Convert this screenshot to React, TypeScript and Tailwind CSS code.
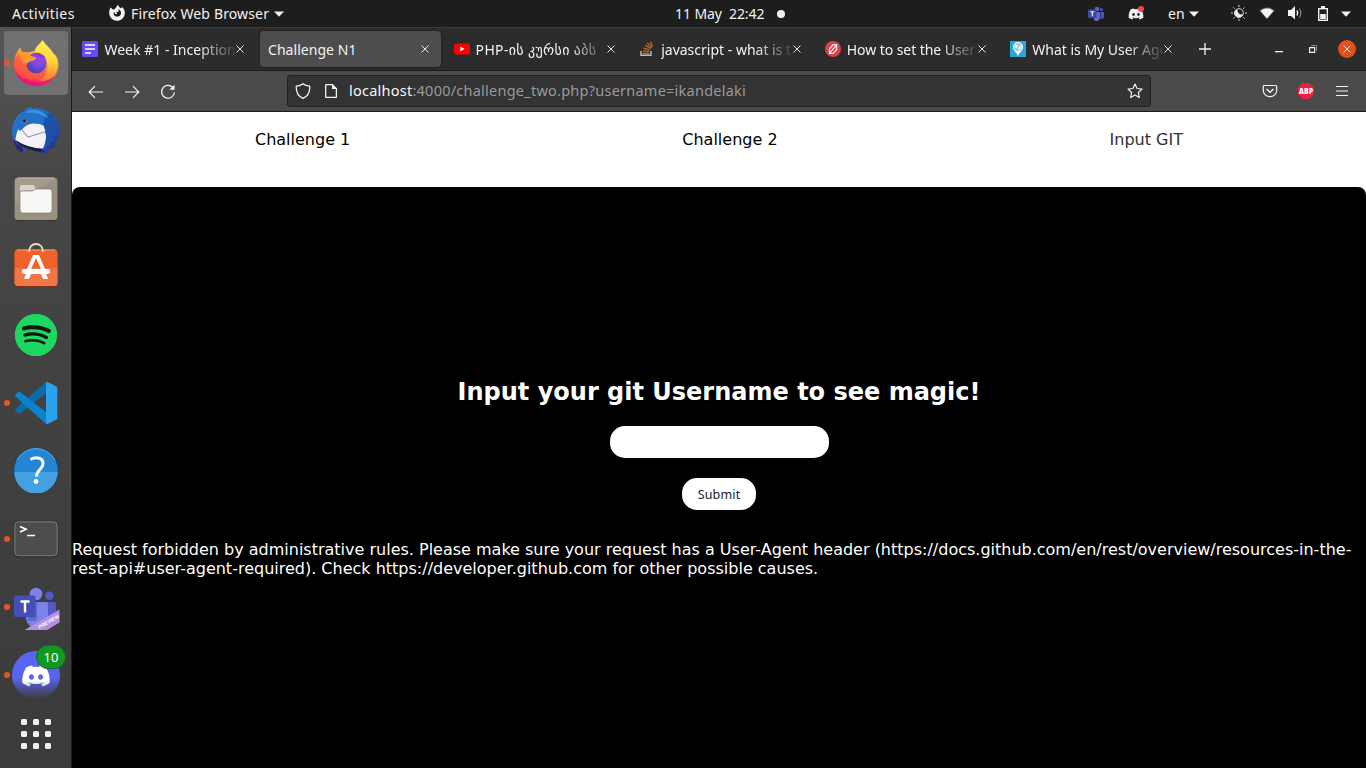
import React from "react";
import { FaSpotify, FaDiscord } from "react-icons/fa";

const ui = "font-['Noto_Sans','DejaVu_Sans',sans-serif]";

const Caret = () => (
  <svg width="10" height="6" viewBox="0 0 10 6" className="shrink-0" fill="#f2f2f2"><path d="M0 .5h10L5 5.7z" /></svg>
);

const Cross = () => (
  <svg width="8" height="8" viewBox="0 0 8 8" className="shrink-0" stroke="#e6e6e6" strokeWidth="1"><path d="M.5.5l7 7M7.5.5l-7 7" /></svg>
);

function TeamsTray() {
  return (
    <svg width="16" height="16" viewBox="0 0 16 16" className="shrink-0">
      <circle cx="9" cy="3" r="2.3" fill="#5b63c5" /><circle cx="13.4" cy="3.6" r="1.7" fill="#4b53bc" />
      <path d="M6 6h6v6a3.5 3.5 0 0 1-6 2z" fill="#6068cc" /><path d="M12.6 6H16v4.500a2.700 2.700 0 0 1-3.400 2.500z" fill="#4b53bc" />
      <rect y="3.500" width="8.500" height="8.500" rx="1" fill="#4048a8" /><path d="M2.300 5.800h4M4.300 5.800v4.500" stroke="#fff" strokeWidth="1.100" />
    </svg>
  );
}

function TopBar() {
  return (
    <header className={`flex h-[27px] shrink-0 items-center bg-[#1d1d1d] text-[14px] leading-[20px] whitespace-pre text-[#f2f2f2] ${ui}`}>
      <span className="ml-3 w-[97px] tracking-[0.45px]">Activities</span>
      <svg width="16" height="16" viewBox="0 0 16 16" className="-mt-[1px] shrink-0" fill="#f2f2f2">
        <path fillRule="evenodd" d="M1.600 2.500L4.300 4.700 7 3.100C7.200 1.600 8 .6 9.300 0c.1 1.700 1.500 2.300 2.400 3.200 1-.2 1.400-.8 1.500-1.500C15 3.900 16 6 15.800 8.500 15.400 13 12 15.800 8 15.800S.4 12.700.2 8.300c-.1-2.300.4-4.200 1.400-5.800zM5 6.800C3.900 9.500 5.500 11.600 8 11.600s4-1.600 4-3.700-1.300-3.200-2.700-3.300L9.600 6.700 6.900 7.200 8.400 8.700 6.300 9.200z" />
      </svg>
      <span className="ml-[6px] w-[143px] tracking-[0.14px]">Firefox Web Browser</span>
      <Caret />
      <span className="ml-[391px] w-[102px] tracking-[-0.08px]">11 May  22:42</span>
      <span className="size-2 rounded-full bg-[#f2f2f2]" />
      <span className="ml-[303px]"><TeamsTray /></span>
      <span className="relative ml-6 flex">
        <FaDiscord size={16} color="#f2f2f2" />
        <span className="absolute top-0 right-0 size-[6px] rounded-full bg-[#f04747]" />
      </span>
      <span className="ml-6 w-[21px]">en</span>
      <Caret />
      <svg width="16" height="16" viewBox="0 0 16 16" className="-mt-[1px] ml-8 shrink-0" fill="none" stroke="#d8d8d8" strokeWidth="1">
        <path d="M8 0v2M8 14v2M0 8h2M14 8h2M2.400 2.400l1.300 1.300M12.300 12.300l1.300 1.300M2.400 13.600l1.300-1.300M12.300 3.700l1.300-1.300" />
        <circle cx="8" cy="8" r="4.300" /><path fill="#f2f2f2" d="M6 4.200C6 8 8.500 10.300 11.800 9.800A4.300 4.300 0 1 1 6 4.200z" />
      </svg>
      <svg width="16" height="12" viewBox="0 0 16 12" className="-mt-[1px] ml-3 shrink-0"><path d="M.4 3.500Q8-2.500 15.600 3.500L8 12z" fill="#777" /><path d="M1.600 3.900Q8-.8 14.400 3.900L8 11.600z" fill="#f2f2f2" /></svg>
      <svg width="16" height="14" viewBox="0 0 16 14" className="-mt-[1px] ml-3 shrink-0" fill="none"><path d="M1 4h3l4-4v13.500L4 10H1z" fill="#f2f2f2" /><path d="M9.800 4.500q1.800 2.500 0 5" stroke="#eee" strokeWidth="1.300" /><path d="M12.300 2.500q3.200 4.500 0 9" stroke="#888" strokeWidth="1.200" /></svg>
      <svg width="10" height="15" viewBox="0 0 10 15" className="-mt-[1px] ml-[15px] shrink-0"><path d="M3 0h4v2h3v13H0V2h3z" fill="#f2f2f2" /><path d="M1.400 3.400h7.200v10.200H1.400z" fill="#1d1d1d" /><path d="M2.200 8h5.600v5H2.200z" fill="#f2f2f2" /></svg>
      <span className="ml-[13px]"><Caret /></span>
    </header>
  );
}

function FirefoxIcon() {
  return (
    <svg width="46" height="46" viewBox="0 0 46 46" className="-mt-[1px]">
      <defs>
        <linearGradient id="ff1" x1=".8" y1="0" x2=".3" y2="1"><stop offset="0" stopColor="#ffd83b" /><stop offset=".35" stopColor="#ffa436" /><stop offset=".65" stopColor="#ff5140" /><stop offset="1" stopColor="#e9117c" /></linearGradient>
        <linearGradient id="ff2" x1=".5" y1="0" x2=".4" y2="1"><stop offset="0" stopColor="#fff352" /><stop offset=".5" stopColor="#ffd338" /><stop offset="1" stopColor="#ff7139" /></linearGradient>
        <radialGradient id="ff3" cx=".65" cy=".25" r=".75"><stop offset="0" stopColor="#a63be8" /><stop offset=".5" stopColor="#7550dc" /><stop offset="1" stopColor="#4f3db8" /></radialGradient>
      </defs>
      <path d="M7.500 7c0 2 .8 3.500 2 5.300 2.500-.5 4-.3 6 .2L31 8l9 5c4 3 5.500 7 5.500 12C45 37 35.500 46 23.500 46S.8 37 .8 25C.8 18 3 12 7.500 7z" fill="url(#ff1)" />
      <path d="M29.500 0c3 5 8 8 10.500 13 1 1 1.500 2.500 1.800 3.500l.7-1.500c3 7 2 16-2.500 22C36 41 30 42 25 40c6-2 10-7 9.500-14-.3-6-3.500-10-8.500-12-3-1-4-2-4-3 0-4 4-6 7.500-11z" fill="url(#ff2)" />
      <circle cx="23.300" cy="23" r="10.300" fill="url(#ff3)" />
      <path d="M21 13c5-.5 9 1 11.500 4.500-2-1-3.500-1-5.500-.5z" fill="#8a36d2" />
      <path d="M6 19c1-5 5-6.500 9.500-6.500 1.500 3 3 4 6.500 4.500 1 .3 1.500 1 1 1.500-1 1.500-3.500 2.500-6 3-2.500 1-3.500 2-3.500 4C10 25 7 23 6 19z" fill="#ff9a33" />
      <path d="M1 24c.5-5 3-9 6-10 0 5 3 8 6 8.500C13 30 18 34.500 25 33.300c3-.5 5-1.500 7-3.300-1.500 7-7 10.500-14 9.500C8 38 2 32 1 24z" fill="#ff5d3c" opacity=".75" />
      <path d="M2 32c7 11 27 14 40 4-4 6.500-11 10-18.500 10C13 46 5 40 2 32z" fill="#e5167a" opacity=".8" />
    </svg>
  );
}

function ThunderbirdIcon() {
  return (
    <svg width="50" height="50" viewBox="0 0 50 50">
      <defs><linearGradient id="tb" x1="0" y1="0" x2="1" y2="1"><stop offset="0" stopColor="#2a86d8" /><stop offset=".5" stopColor="#1f62ba" /><stop offset="1" stopColor="#2b2585" /></linearGradient></defs>
      <path d="M13 5c2-3 5-4 8-4l-1 2c8-2 16 1 21 5C46 12 49 18 48.500 25c0 7-3 11-5 14l1 .5c-3 3-6 4-9 5l2 1c-3 2-7 3-11 2l4-3c-5 1-12-1-18-4l3 6C8 44 3 39 2 32 0 26 1 19 4 14c2-4 5-7 9-9z" fill="url(#tb)" />
      <path d="M4.300 34l3-15 8-2 17 1 3 11-1.300 14C21 42 12 39 4.300 34z" fill="#f3f2f5" />
      <path d="M7.500 20L17 31l18-5.500" fill="none" stroke="#9a9da6" strokeWidth="1.100" />
      <path d="M4.300 34C13 40 23 43 34 43l-1.500 3C20 45 9 41 4.300 34z" fill="#241437" />
      <path d="M2.500 24c0-5 2-10 6-13 3-6 7-8 12-8 9-1 15 3 17 9 1 7-1 12-3 17l-1-9c-6-3-11-4-17-1-3 1-5 5-8 6l-1-2-3 5c-1-1-2-2-2-4z" fill="#2270c8" />
      <path d="M35 10c3-3 6-3 9 1l-3 3 6 2-5 4 6 2-6 4 6 3-7 2 3 4-6 1 3 3-7 1 2 3-6 3c6-9 7-21 2-28z" fill="#1d51a6" />
      <path d="M12 16l4-2 1 2-3 2z" fill="#8b6f4a" /><circle cx="13.500" cy="15" r="1.300" fill="#131a30" />
      <path d="M14 7c3-4 8-4 14-2 4 1 8 4 10 8-7-5-14-7-24-6z" fill="#3795e6" />
      <path d="M2.500 33l5 7-.5-3 5 5 0 5C7 45 3 40 2.500 33z" fill="#2b2578" />
    </svg>
  );
}

function FilesIcon() {
  return (
    <svg width="46" height="46" viewBox="0 0 46 46">
      <rect x="1" y="1" width="44" height="44" rx="4" fill="#39352e" />
      <rect x="1.500" y="1.500" width="43" height="42.500" rx="3.500" fill="#9a9281" />
      <path d="M2 4a3 3 0 0 1 3-2h38L2 28z" fill="#a9a18f" opacity=".65" />
      <path d="M5 2h36" stroke="#c4beb1" />
      <path d="M7 15V11q0-2 2-2h11q1 0 2 2l1 3z" fill="#d9d4cc" />
      <path d="M7 16q0-1 2-1h9q2 0 3-1t3-1h12q3 0 3 3v18q0 3-3 3H10q-3 0-3-3z" fill="#f9f8f6" stroke="#777061" strokeWidth=".6" />
    </svg>
  );
}

function SoftwareIcon() {
  return (
    <svg width="46" height="46" viewBox="0 0 46 46" className="-mt-[4px]">
      <rect x="1" y="7" width="44" height="38" rx="4" fill="#7c351c" />
      <rect x="1.500" y="7.500" width="43" height="36.500" rx="3.500" fill="#f0622c" />
      <path d="M2 26h42.500v14q0 4-4 4H5.500q-4 0-4-4z" fill="#f27e50" opacity=".7" />
      <path d="M4 8h38" stroke="#ff9a72" />
      <path d="M16 10c0-5 3-8 7-8s7 3 7 8" stroke="#f3d9b6" strokeWidth="1.800" fill="none" />
      <path d="M20 13h6l6 14h-4l-5-11-5 11h-4z" fill="#fff" />
      <path d="M13 32h5l-2 5h-5zM28 32h5l2 5h-5z" fill="#fff" />
      <rect x="9" y="27" width="28" height="5" rx="2.500" fill="#fff" />
    </svg>
  );
}

function VsCodeIcon() {
  return (
    <svg width="44" height="44" viewBox="0 0 44 44">
      <path d="M32 1v11L6 32.500q-1 .7-2 0L1.500 30q-1-1 0-2z" fill="#0a6cad" />
      <path d="M32 43V31L6 11q-1-.7-2 0L1.500 13.500q-1 1 0 2z" fill="#0a84d0" />
      <path d="M32 1.500q1-.8 2-.2l8.500 4.200q.8.500.8 1.500v30q0 1-.8 1.500L34 42.700q-1 .6-2-.2z" fill="#29a3ee" />
    </svg>
  );
}

function HelpIcon() {
  return (
    <svg width="46" height="46" viewBox="0 0 46 46" className="-mt-[2px]">
      <circle cx="23" cy="23" r="22.500" fill="#1b3f60" /><circle cx="23" cy="22.700" r="21.700" fill="#2485d5" />
      <path d="M1.300 25h43.400a21.700 21.700 0 0 1-43.400 0z" fill="#43a1e2" />
      <path d="M4 13a21.500 21.500 0 0 1 38 0" stroke="#64b9ef" fill="none" strokeWidth=".7" />
      <path d="M17.500 12.500C23 9.500 30.500 10.500 30 17c-.3 5-6.500 6.500-6.500 12.500" stroke="#fff" strokeWidth="3" fill="none" /><circle cx="23" cy="34.500" r="2.400" fill="#fff" />
    </svg>
  );
}

function TerminalIcon() {
  return (
    <svg width="46" height="38" viewBox="0 0 46 38">
      <rect x=".7" y=".7" width="44.600" height="36.600" rx="4.500" fill="#242424" />
      <rect x="1.800" y="1.800" width="42.400" height="34" rx="3.500" fill="#4d4d4d" stroke="#8a8a8a" strokeWidth=".9" />
      <path d="M7 6.500l6 2.800-6 2.800" stroke="#fff" strokeWidth="1.700" fill="none" /><path d="M14 15.500h8" stroke="#fff" strokeWidth="1.500" />
    </svg>
  );
}

function TeamsIcon() {
  return (
    <svg width="46" height="44" viewBox="0 0 46 44" className="mt-[4px] ml-[2px]">
      <circle cx="22" cy="7" r="6.300" fill="#7b83eb" /><circle cx="35.300" cy="8.800" r="4.300" fill="#5059c9" />
      <path d="M31 15h9q2 0 2 2v13q-1 6-9 6z" fill="#5059c9" /><path d="M12 15h20q2 0 2 2v15q-2 9-11 9T12 32z" fill="#7b83eb" />
      <path d="M12 15h11v16q0 3-3 3h-6z" fill="#4f58bd" opacity=".6" />
      <rect y="8.500" width="21.500" height="21.500" rx="1.500" fill="#464eb8" /><path d="M6.500 14.500h9M11 14.500v11" stroke="#fff" strokeWidth="2.400" />
      <path d="M10.500 43L45.500 22.500v13L33 43z" fill="#b490e3" />
      <text x="25.500" y="42" transform="rotate(-30 25.500 42)" fill="#fff" fontFamily="Liberation Sans" fontWeight="700" fontSize="5">PREVIEW</text>
    </svg>
  );
}

function DiscordDock() {
  return (
    <div className="relative flex size-[48px] items-center justify-center rounded-full bg-[linear-gradient(180deg,#5865f2_0%,#5865f2_55%,#3c3c3c_100%)]">
      <div className="mt-[1px] [mask-image:linear-gradient(180deg,#000_65%,rgba(0,0,0,.45)_100%)]"><FaDiscord size={30} color="#fff" /></div>
      <div className={`absolute -top-[6px] left-[24px] flex h-[24px] w-[30px] items-center justify-center rounded-full border border-[#1b6b20] bg-[#119a20] pt-[1px] text-[13px] text-white ${ui}`}>10</div>
    </div>
  );
}

function DockItem({ children, running, active }: { children: React.ReactNode; running?: boolean; active?: boolean }) {
  return (
    <div className="grid h-[68px] shrink-0 grid-cols-[4px_64px_3px] items-center">
      <span className="relative h-full">{running && <span className="absolute top-[31px] left-0 z-10 ml-[4px] size-[6px] rounded-full bg-[#e95420]" />}</span>
      <div className={`flex h-16 items-center justify-center rounded ${active ? "bg-[#717171]" : ""}`}>{children}</div>
    </div>
  );
}

function Dock() {
  return (
    <aside className="flex w-[72px] shrink-0 flex-col border-r border-[#191919] bg-[linear-gradient(180deg,#555_0%,#474747_20%,#424242_45%,#3b3b3b_100%)] pt-[2px]">
      <DockItem running active><FirefoxIcon /></DockItem>
      <DockItem><ThunderbirdIcon /></DockItem>
      <DockItem><FilesIcon /></DockItem>
      <DockItem><SoftwareIcon /></DockItem>
      <DockItem><div className="rounded-full bg-[#1ed760]"><div className="rounded-full bg-[radial-gradient(circle,#191414_60%,#1ed760_66%)]"><FaSpotify size={42} color="#1ed760" /></div></div></DockItem>
      <DockItem running><VsCodeIcon /></DockItem>
      <DockItem><HelpIcon /></DockItem>
      <DockItem running><TerminalIcon /></DockItem>
      <DockItem running><TeamsIcon /></DockItem>
      <DockItem running><DiscordDock /></DockItem>
      <div className="mt-[10px] ml-[21px] grid w-[30px] grid-cols-3 gap-[6px]">
        {Array.from({ length: 9 }, (_, i) => <span key={i} className="size-[6px] rounded-[1.500px] bg-[#f2f2f2]" />)}
      </div>
    </aside>
  );
}

const DocFavicon = () => (
  <svg width="16" height="16" viewBox="0 0 16 16"><rect width="16" height="16" rx="1.500" fill="#674cf5" /><path d="M3 4h10M3 8h10M3 12h6" stroke="#fff" strokeWidth="1.700" /></svg>
);
const YoutubeFavicon = () => (
  <svg width="16" height="16" viewBox="0 0 16 16"><rect y="2.500" width="16" height="11" rx="2.500" fill="#f00" /><path d="M6.300 5.600v4.800L10.600 8z" fill="#fff" /></svg>
);
const StackFavicon = () => (
  <svg width="16" height="16" viewBox="0 0 16 16" fill="none"><path d="M2 10v4.300h10V10" stroke="#bcbbbb" strokeWidth="1.400" /><path d="M3.700 12.300h6.500M3.900 9.800l6.500.7M4.600 7.100l6.300 1.900M6 4.300l5.600 3.300M8.300 2l4.300 4.800M11.500.8l1.900 5" stroke="#d36a17" strokeWidth="1.200" /></svg>
);
const RedFavicon = () => (
  <svg width="16" height="16" viewBox="0 0 16 16" fill="none"><circle cx="8" cy="8" r="8" fill="#dc4048" /><path d="M7.800 3.700h3.900v4.800M11.500 4.200L4.800 11.800M8.500 12.300H4.500V7.500M4.800 7.500L8.100 3.700M8.200 12.300L11.700 8.300" stroke="#fff" strokeWidth="1.150" /></svg>
);
const GlobeFavicon = () => (
  <svg width="16" height="16" viewBox="0 0 16 16"><rect width="16" height="16" fill="#29a6da" /><path d="M3 6a5 5 0 1 1 10 0c0 3-3 5-5 9-2-4-5-6-5-9z" fill="#fff" /><circle cx="8" cy="6" r="3.900" fill="#8dcce1" /><path d="M5 3l3 1-1 3-3-1zM9 5l3-1-1 4-3 1z" fill="#e6f6f8" /></svg>
);

function Tab({ icon, title, active, spacing }: { icon?: React.ReactNode; title: string; active?: boolean; spacing: string }) {
  return (
    <div className="w-[185.600px] shrink-0 pr-[4.600px]">
      <div className={`flex h-9 items-center rounded-[4px] px-2 ${active ? "bg-[#4d4d4d] shadow-[0_0_2px_#111]" : ""}`}>
        {icon && <span className="mr-[6px] shrink-0">{icon}</span>}
        <span className={`min-w-0 flex-1 overflow-hidden pt-[1px] whitespace-nowrap ${spacing} ${active ? "" : "[mask-image:linear-gradient(90deg,#000_72%,transparent_104%)]"}`}>{title}</span>
        <span className="mr-[3.500px] ml-[2px]"><Cross /></span>
      </div>
    </div>
  );
}

function TabBar() {
  return (
    <div className={`flex h-11 shrink-0 items-center border-t border-b border-t-[#3a3a3a] border-b-[#1b1b1b] bg-[#2c2c2c] pl-[2.400px] text-[14px] leading-[20px] text-[#f2f2f2] ${ui}`}>
      <Tab icon={<DocFavicon />} title="Week #1 - Inception" spacing="tracking-[0.02px]" />
      <Tab title="Challenge N1" spacing="tracking-[0.05px]" active />
      <Tab icon={<YoutubeFavicon />} title="PHP-ის კურსი აბს" spacing="tracking-[0.33px]" />
      <Tab icon={<StackFavicon />} title="javascript - what is t" spacing="tracking-[0px]" />
      <Tab icon={<RedFavicon />} title="How to set the User" spacing="tracking-[-0.06px]" />
      <Tab icon={<GlobeFavicon />} title="What is My User Age" spacing="tracking-[-0.02px]" />
      <svg width="12" height="12" viewBox="0 0 12 12" className="ml-[11px] shrink-0" stroke="#f2f2f2" strokeWidth="1.300"><path d="M6 0v12M0 6h12" /></svg>
      <svg width="8" height="8" viewBox="0 0 8 8" className="ml-[64px] shrink-0"><path d="M0 6h8v1.300H0z" fill="#eee" /></svg>
      <svg width="8" height="8" viewBox="0 0 8 8" className="ml-[26px] shrink-0" fill="none"><path d="M.6 2.600h5v4.800h-5z" stroke="#eee" strokeWidth="1.200" /><path d="M2 .5h5.500V6" stroke="#888" /></svg>
      <span className="ml-[21px] flex size-[18px] shrink-0 items-center justify-center rounded-full bg-[#e2501c]"><Cross /></span>
    </div>
  );
}

function Toolbar() {
  return (
    <div className={`flex h-[41px] shrink-0 items-center border-b border-[#1b1b1b] bg-[#4a4a4a] ${ui}`}>
      <svg width="16" height="16" viewBox="0 0 16 16" className="mt-[1px] ml-4 shrink-0" fill="none" stroke="#f2f2f2" strokeWidth="1.200"><path d="M15 8H1.500M7 2.200L1.200 8 7 13.800" /></svg>
      <svg width="16" height="16" viewBox="0 0 16 16" className="mt-[1px] ml-5 shrink-0" fill="none" stroke="#f2f2f2" strokeWidth="1.200"><path d="M1 8h13.500M9 2.200L14.800 8 9 13.800" /></svg>
      <svg width="16" height="16" viewBox="0 0 16 16" className="mt-[2px] ml-5 shrink-0" fill="none" stroke="#f2f2f2" strokeWidth="1.300"><path d="M12.500 3.200A6.400 6.400 0 1 0 14.400 8.500" /><path d="M9.300 5.800h5.200V.8z" fill="#f2f2f2" stroke="none" /></svg>
      <div className="ml-[111px] flex h-8 w-[864px] shrink-0 items-center rounded-[3px] border border-[#202020] bg-[#333]">
        <svg width="16" height="16" viewBox="0 0 16 16" className="ml-[7px] shrink-0" fill="none" stroke="#f2f2f2" strokeWidth="1.300" strokeLinejoin="round"><path d="M8 .8C6 2.600 3.500 3 1.300 3.200 1 8 2.500 13 8 15.300 13.500 13 15 8 14.700 3.200 12.500 3 10 2.600 8 .8z" /></svg>
        <svg width="16" height="16" viewBox="0 0 16 16" className="ml-3 shrink-0"><path d="M2.700 1.700h6.800l3.900 3.900v8.700H2.700z" fill="none" stroke="#f2f2f2" strokeWidth="1.300" strokeLinejoin="round" /><path d="M9 1.300V6h4.700z" fill="#f2f2f2" /></svg>
        <span className="ml-[10px] flex-1 text-[14.500px] tracking-[0.240px] text-[#9a9a9a]"><span className="text-[#f9f9f9]">localhost</span>:4000/challenge_two.php?username=ikandelaki</span>
        <svg width="16" height="16" viewBox="0 0 16 16" className="mr-[7px] shrink-0" fill="none" stroke="#f2f2f2" strokeWidth="1.200" strokeLinejoin="round"><path d="M8 1l2.100 4.500 4.900.6-3.600 3.400.9 5L8 12.100l-4.300 2.400.9-5L1 6.100l4.900-.6z" /></svg>
      </div>
      <svg width="16" height="16" viewBox="0 0 16 16" className="ml-[111px] shrink-0" fill="none" stroke="#f2f2f2" strokeWidth="1.200" strokeLinejoin="round"><path d="M2.300 2.500h11.400q1 0 1 1v4a6.700 6.200 0 0 1-13.400 0v-4q0-1 1-1z" /><path d="M4.500 6l3.500 3.300L11.500 6" strokeWidth="1.500" /></svg>
      <svg width="16" height="16" viewBox="0 0 16 16" className="ml-5 shrink-0"><path d="M4.700 0h6.600L16 4.700v6.600L11.300 16H4.700L0 11.300V4.700z" fill="#ed1e45" /><text x="8" y="10.900" textAnchor="middle" fill="#fff" fontFamily="Open Sans" fontWeight="800" fontSize="8" textLength="14" lengthAdjust="spacingAndGlyphs">ABP</text></svg>
      <svg width="12" height="12" viewBox="0 0 12 12" className="ml-[22px] shrink-0" stroke="#f2f2f2" strokeWidth="1.200"><path d="M0 1.500h12M0 6h12M0 10.500h12" /></svg>
    </div>
  );
}

function Page() {
  return (
    <div className="flex flex-1 flex-col bg-white font-['DejaVu_Sans',sans-serif] text-[16px] leading-[19px] text-black">
      <nav className="grid h-[75px] shrink-0 grid-cols-[427.300px_427.300px_1fr] pt-[18px] pl-[183px]">
        <a>Challenge 1</a>
        <a>Challenge 2</a>
        <a className="text-[#303030]">Input GIT</a>
      </nav>
      <main className="flex flex-1 flex-col items-center rounded-t-lg bg-black text-white">
        <h1 className="mt-[191px] text-[24px] leading-[29px] font-bold">Input your git Username to see magic!</h1>
        <input aria-label="Username" className="mt-[19px] h-8 w-[219px] rounded-[15px] bg-white px-4 text-black" />
        <button className={`mt-5 h-8 w-[74px] rounded-[15px] bg-white text-[12.500px] tracking-[0.150px] text-[#222] ${ui}`}>Submit</button>
        <p className="mt-[30px] w-full whitespace-nowrap">Request forbidden by administrative rules. Please make sure your request has a User-Agent header (https://docs.github.com/en/rest/overview/resources-in-the-<br />rest-api#user-agent-required). Check https://developer.github.com for other possible causes.</p>
      </main>
    </div>
  );
}

export default function App() {
  return (
    <div className="flex h-[768px] w-[1366px] flex-col overflow-hidden bg-[#1d1d1d]">
      <TopBar />
      <div className="flex min-h-0 flex-1">
        <Dock />
        <section className="flex min-w-0 flex-1 flex-col">
          <TabBar />
          <Toolbar />
          <Page />
        </section>
      </div>
    </div>
  );
}
